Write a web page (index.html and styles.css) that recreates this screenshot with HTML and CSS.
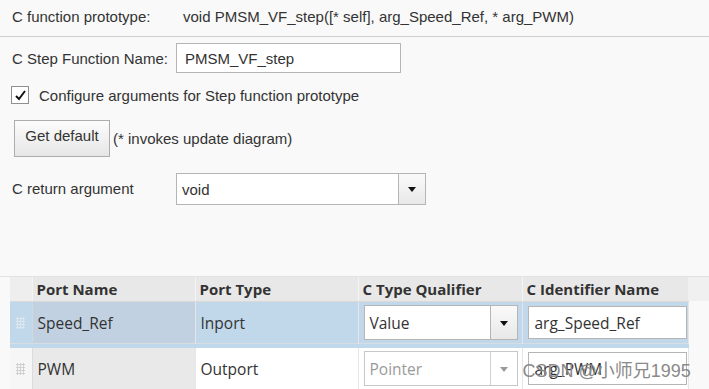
FILE: index.html
```html
<!DOCTYPE html>
<html lang="en">
<head>
  <meta charset="UTF-8">
  <title>Code Interface Configuration</title>
  <link rel="stylesheet" href="styles.css">
</head>
<body>
  <div class="panel">
    <div class="proto-row">
      <span class="label">C function prototype:</span><span class="proto">void PMSM_VF_step([* self], arg_Speed_Ref, * arg_PWM)</span>
    </div>

    <div class="form-row step-row">
      <span class="label">C Step Function Name:</span>
      <input class="text-input step-input" type="text" value="PMSM_VF_step">
    </div>

    <label class="check-row">
      <span class="checkbox">
        <svg width="13" height="13" viewBox="0 0 13 13"><path d="M2 7 L5 10 L11 2" fill="none" stroke="#111" stroke-width="2"/></svg>
      </span>
      Configure arguments for Step function prototype
    </label>

    <div class="button-row">
      <button class="btn">Get default</button>
      <span class="note">(* invokes update diagram)</span>
    </div>

    <div class="form-row return-row">
      <span class="label">C return argument</span>
      <div class="select return-select">
        <span class="select-value">void</span>
        <span class="select-arrow"></span>
      </div>
    </div>
  </div>

  <div class="table-wrap">
    <table class="ports">
      <colgroup>
        <col class="grip-w">
        <col class="name-w">
        <col class="type-w">
        <col class="qual-w">
        <col class="ident-w">
      </colgroup>
      <thead>
        <tr>
          <th class="grip-col"></th>
          <th>Port Name</th>
          <th>Port Type</th>
          <th>C Type Qualifier</th>
          <th>C Identifier Name</th>
        </tr>
      </thead>
      <tbody>
        <tr class="selected">
          <td class="grip-col"><span class="grip"></span></td>
          <td class="name-col">Speed_Ref</td>
          <td>Inport</td>
          <td>
            <div class="select cell-select">
              <span class="select-value">Value</span>
              <span class="select-arrow"></span>
            </div>
          </td>
          <td><input class="text-input cell-input" type="text" value="arg_Speed_Ref"></td>
        </tr>
        <tr>
          <td class="grip-col"><span class="grip"></span></td>
          <td class="name-col">PWM</td>
          <td>Outport</td>
          <td>
            <div class="select cell-select disabled">
              <span class="select-value">Pointer</span>
              <span class="select-arrow"></span>
            </div>
          </td>
          <td class="ident-cell">
            <input class="text-input cell-input" type="text" value="arg_PWM">
            <span class="watermark">CSDN @小师兄1995</span>
          </td>
        </tr>
      </tbody>
    </table>
    <div class="header-tail"></div>
  </div>
</body>
</html>
```

FILE: styles.css
```css
body {
  margin: 0;
  background-color: #f9f9f9;
  font-family: "Liberation Sans", Arial, sans-serif;
  font-size: 15px;
  color: #333;
  overflow: hidden;
}

.panel {
  padding-left: 12px;
}

.label {
  display: inline-block;
  width: 164px;
}

.proto-row {
  height: 36px;
  line-height: 33px;
  border-bottom: 1px solid #cfcfcf;
  margin-left: -12px;
  padding-left: 12px;
  white-space: nowrap;
}

.proto-row .label {
  width: 171px;
}

.form-row {
  display: flex;
  align-items: center;
}

.step-row {
  margin-top: 6px;
  height: 30px;
}

.text-input {
  font-family: inherit;
  font-size: 15px;
  color: #333;
  background: #fff;
  border: 1px solid #b5b5b5;
  box-sizing: border-box;
  outline: none;
  padding: 0 8px;
}

.step-input {
  width: 225px;
  height: 30px;
}

.check-row {
  display: flex;
  align-items: center;
  margin-top: 13px;
  margin-left: -1px;
  height: 18px;
}

.checkbox {
  width: 16px;
  height: 16px;
  border: 1px solid #8f8f8f;
  background: #fff;
  margin-right: 10px;
  display: flex;
  align-items: center;
  justify-content: center;
}

.button-row {
  display: flex;
  align-items: center;
  margin-top: 16px;
}

.btn {
  width: 96px;
  height: 37px;
  margin-left: 2px;
  margin-right: 3px;
  border: 1px solid #adadad;
  background: linear-gradient(#fcfcfc, #e6e6e6);
  font-family: inherit;
  font-size: 15px;
  color: #333;
  padding: 0 0 6px;
}

.return-row {
  margin-top: 16px;
  height: 32px;
}

.return-row .label {
  padding-bottom: 2px;
}

.select {
  display: flex;
  background: #fff;
  border: 1px solid #b5b5b5;
  box-sizing: border-box;
}

.select-value {
  flex: 1;
  padding-left: 5px;
  align-self: center;
}

.select-arrow {
  width: 26px;
  border-left: 1px solid #b5b5b5;
  background: linear-gradient(#fafafa, #e8e8e8);
  position: relative;
}

.select-arrow::after {
  content: "";
  position: absolute;
  left: 9px;
  top: 50%;
  margin-top: -2px;
  border-left: 4px solid transparent;
  border-right: 4px solid transparent;
  border-top: 5px solid #111;
}

.return-select {
  width: 250px;
  height: 32px;
}

/* ports table */

.table-wrap {
  position: relative;
  margin-top: 71px;
  padding-left: 10px;
  border-top: 1px solid #e2e2e2;
}

.header-tail {
  position: absolute;
  left: 688px;
  right: 0;
  top: 0;
  height: 24px;
  background: #f0f0f0;
}

.ports {
  border-collapse: collapse;
  font-family: "Open Sans", "Noto Sans", sans-serif;
  font-size: 15.5px;
  color: #333;
  table-layout: fixed;
  width: 678px;
}

.grip-w { width: 22px; }
.name-w { width: 163px; }
.type-w { width: 163px; }
.qual-w { width: 164px; }
.ident-w { width: 166px; }

.ports th,
.ports td {
  box-sizing: border-box;
  white-space: nowrap;
  overflow: hidden;
}

.ports th {
  height: 24px;
  padding: 0 4px;
  text-align: left;
  font-size: 15px;
  font-weight: bold;
  background: #e8e8e8;
  border-right: 1px solid #f4f4f4;
  border-bottom: 1px solid #d9d9d9;
  line-height: 22px;
}

.ports th.grip-col {
  background: #eeeeee;
}

.ports td {
  height: 45px;
  padding: 0 5px;
  background: #fff;
  border-right: 1px solid #e6e6e6;
  border-bottom: 3px solid #f3f3f3;
  box-shadow: inset 0 -1px 0 #d6d6d6;
}

.ports td.grip-col {
  background: #f6f6f6;
  border-right: 1px solid #dcdcdc;
  padding: 0;
}

.ports td.name-col {
  background: #e9e9e9;
}

.ports tr.selected td {
  background: #c1d7ea;
  border-bottom: 4px solid #c1d7ea;
  box-shadow: inset 0 -1px 0 #d8dde2;
}

.ports tr.selected td.name-col {
  background: #c1d1e1;
}

.ports tr.selected td.grip-col {
  background: #c1d7ea;
  border-right-color: #d0d8e0;
}

.grip {
  display: block;
  width: 9px;
  height: 12px;
  margin: 0 auto;
  background-image: radial-gradient(circle, #d0d0d0 1px, transparent 1.2px);
  background-size: 3px 3px;
}

.selected .grip {
  background-image: radial-gradient(circle, #dde6ee 1px, transparent 1.2px);
}

.cell-select {
  width: 154px;
  height: 35px;
}

.cell-select .select-value {
  padding-left: 5px;
}

.cell-select.disabled {
  color: #9a9a9a;
  border-color: #c8c8c8;
}

.cell-select.disabled .select-arrow {
  border-left-color: #d0d0d0;
  background: #fff;
}

.cell-select.disabled .select-arrow::after {
  border-top-color: #9a9a9a;
}

.cell-input {
  width: 159px;
  height: 33px;
  font-family: inherit;
  font-size: 15.5px;
  padding: 0 6px;
  display: block;
}

.ports td.ident-cell {
  position: relative;
  overflow: visible;
}

.watermark {
  position: absolute;
  left: 0;
  top: 8px;
  font-family: "Liberation Sans", "Noto Sans CJK SC", sans-serif;
  font-size: 18px;
  color: #8a8a8a;
  white-space: nowrap;
}
```
